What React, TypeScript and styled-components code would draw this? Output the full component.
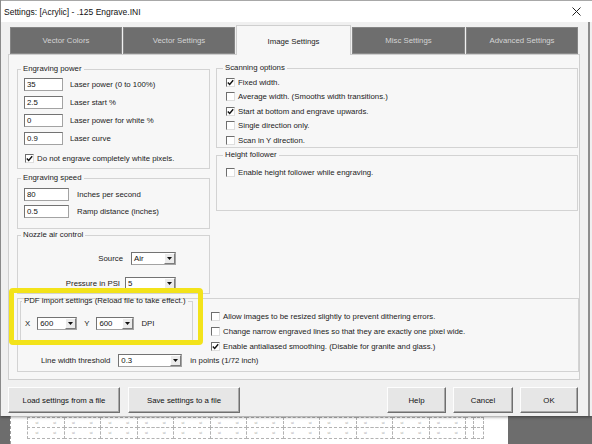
import React from "react";
import styled, { createGlobalStyle } from "styled-components";

const GlobalStyle = createGlobalStyle`
  html, body { margin: 0; padding: 0; background: #fff; }
  body { font-family: "Liberation Sans", Arial, sans-serif; }
  * { box-sizing: border-box; }
`;

const Page = styled.div`
  width: 592px;
  height: 444px;
  overflow: hidden;
  display: flex;
  flex-direction: column;
  background: #6d6d6d;
`;

const Dialog = styled.div`
  position: relative;
  z-index: 1;
  width: 592px;
  height: 416px;
  flex: none;
  display: flex;
  flex-direction: column;
  background: #f0f0f0;
  border-left: 1px solid #8a8a8a;
  box-shadow: 0 1px 3px rgba(0, 0, 0, 0.45);
  font-size: 7.8px;
  color: #222;
`;

const TitleBar = styled.div`
  height: 22px;
  flex: none;
  display: flex;
  align-items: center;
  justify-content: space-between;
  padding: 0 11px 0 3px;
  background: #fff;
  border-top: 1px solid #a8a8a8;
  font-size: 8.5px;
  color: #111;
`;

const Body = styled.div`
  flex: 1;
  display: flex;
`;

const Main = styled.div`
  width: 584px;
  display: flex;
  flex-direction: column;
`;

const RightEdge = styled.div`
  flex: 1;
  padding-left: 3px;
  display: flex;
`;

const Rail = styled.div`
  width: 2px;
  background: #8c8c8c;
`;

const TabsRow = styled.div`
  margin-top: 5px;
  height: 27px;
  padding-left: 9px;
  display: flex;
  gap: 1px;
`;

const Tab = styled.div<{ $w: number; $active?: boolean }>`
  position: relative;
  z-index: ${(p) => (p.$active ? 2 : 0)};
  width: ${(p) => p.$w}px;
  height: ${(p) => (p.$active ? 30 : 27)}px;
  margin-top: ${(p) => (p.$active ? -2 : 0)}px;
  display: flex;
  align-items: center;
  justify-content: center;
  padding-top: ${(p) => (p.$active ? 1 : 0)}px;
  background: ${(p) => (p.$active ? "#f7f7f7" : "#6e6e6e")};
  color: ${(p) => (p.$active ? "#1c1c1c" : "#d4d4d4")};
  border: 1px solid ${(p) => (p.$active ? "#cfcfcf" : "#858585")};
  border-bottom: ${(p) => (p.$active ? "none" : "1px solid #8a8a8a")};
`;

const Panel = styled.div`
  margin-left: 7px;
  width: 572px;
  height: 326px;
  background: #f7f7f7;
  border: 1px solid #cfcfcf;
  padding: 9px 1px 0 8px;
  display: flex;
  flex-direction: column;
`;

const TopSection = styled.div`
  display: flex;
  gap: 6px;
`;

const Column = styled.div<{ $w: number }>`
  width: ${(p) => p.$w}px;
  display: flex;
  flex-direction: column;
`;

const Group = styled.fieldset<{ $h: number; $mt?: number; $pt: number; $pl?: number }>`
  margin: ${(p) => p.$mt ?? 0}px 0 0 0;
  height: ${(p) => p.$h}px;
  min-width: 0;
  border: 1px solid #d3d3d3;
  padding: ${(p) => p.$pt}px 0 0 ${(p) => p.$pl ?? 6}px;
  display: flex;
  flex-direction: column;
`;

const Legend = styled.legend`
  font-size: 7.8px;
  line-height: 10px;
  padding: 0 2px;
  margin-left: -3px;
  color: #222;
`;

const Stack = styled.div<{ $gap: number }>`
  display: flex;
  flex-direction: column;
  gap: ${(p) => p.$gap}px;
`;

const FieldRow = styled.div<{ $gap: number }>`
  display: flex;
  align-items: center;
  gap: ${(p) => p.$gap}px;
  height: 13px;
`;

const TextBox = styled.div<{ $w: number }>`
  width: ${(p) => p.$w}px;
  height: 13px;
  background: #fff;
  border: 1px solid #a3a3a3;
  border-top-color: #737373;
  border-left-color: #737373;
  padding-left: 2px;
  line-height: 11px;
  color: #111;
`;

const SelectBox = styled.div<{ $w: number }>`
  width: ${(p) => p.$w}px;
  height: 13px;
  background: #fff;
  border: 1px solid #a3a3a3;
  border-top-color: #737373;
  border-left-color: #737373;
  display: flex;
  align-items: stretch;
  color: #111;
`;

const SelectText = styled.span`
  flex: 1;
  padding-left: 2px;
  line-height: 11px;
`;

const ArrowBox = styled.span`
  width: 11px;
  background: #ebebeb;
  border: 1px solid;
  border-color: #fff #7d7d7d #7d7d7d #fff;
  display: flex;
  align-items: center;
  justify-content: center;
`;

const NozzleRow = styled.div<{ $gap: number }>`
  display: flex;
  align-items: center;
  justify-content: flex-end;
  gap: ${(p) => p.$gap}px;
  height: 13px;
  padding-right: 33px;
`;

const CheckRow = styled.div<{ $ml?: number; $mt?: number }>`
  display: flex;
  align-items: center;
  gap: 3px;
  height: 10px;
  margin-left: ${(p) => p.$ml ?? 0}px;
  margin-top: ${(p) => p.$mt ?? 0}px;
`;

const Box = styled.span`
  width: 9px;
  height: 9px;
  flex: none;
  background: #fff;
  border: 1px solid;
  border-color: #6e6e6e #dedede #dedede #6e6e6e;
  display: flex;
  align-items: center;
  justify-content: center;
`;

const BottomGroup = styled.div`
  margin-top: 4px;
  width: 562px;
  height: 74px;
  border: 1px solid #d3d3d3;
  display: flex;
  flex-direction: column;
`;

const BottomTop = styled.div`
  display: flex;
`;

const PdfWrap = styled.div`
  position: relative;
  margin: -3px 0 0 2px;
  width: 173px;
`;

const PdfGroup = styled.fieldset`
  margin: 0;
  height: 45px;
  min-width: 0;
  border: 1px solid #d3d3d3;
  padding: 11px 0 0 4px;
  display: flex;
`;

const Highlight = styled.div`
  position: absolute;
  top: -8px;
  left: -11px;
  width: 194px;
  height: 57px;
  border: 5px solid #f3e31a;
  border-radius: 4px;
  pointer-events: none;
`;

const DpiRow = styled.div`
  display: flex;
  align-items: center;
  gap: 7px;
  height: 13px;
`;

const BottomChecks = styled.div`
  margin-left: 18px;
  padding-top: 12px;
  display: flex;
  flex-direction: column;
  gap: 5px;
`;

const LineRow = styled.div`
  margin-top: 3px;
  padding-left: 23px;
  display: flex;
  align-items: center;
  gap: 8px;
  height: 13px;
`;

const ButtonRow = styled.div`
  margin-top: 7px;
  height: 26px;
  padding: 0 7px;
  display: flex;
  gap: 8px;
`;

const ButtonGroup = styled.div`
  margin-left: auto;
  display: flex;
  gap: 7px;
`;

const Button = styled.div<{ $w: number }>`
  width: ${(p) => p.$w}px;
  height: 26px;
  display: flex;
  align-items: center;
  justify-content: center;
  background: #e6e6e6;
  border: 1px solid;
  border-color: #fdfdfd #6f6f6f #6f6f6f #fdfdfd;
  box-shadow: inset -1px -1px 0 #a8a8a8;
  color: #111;
  font-size: 7.8px;
`;

const BottomStrip = styled.div`
  flex: 1;
  display: flex;
`;

const GrayGap = styled.div<{ $w?: number }>`
  width: ${(p) => (p.$w ? `${p.$w}px` : "auto")};
  flex: ${(p) => (p.$w ? "none" : "1")};
  background: #6d6d6d;
`;

const Sheet = styled.div`
  width: 498px;
  background: #fff;
  border-left: 1px dashed #9a9a9a;
  padding: 1px 0 0 16px;
`;

const DashGrid = styled.div`
  display: grid;
  grid-template-columns: repeat(12, 36.5px) 8px 10px;
  grid-auto-rows: 10px 11px;
`;

const DashCell = styled.div`
  border: 1px dashed #b3b3b3;
  margin: 0 -1px -1px 0;
  display: flex;
  align-items: center;
  justify-content: space-around;
  font-size: 3.5px;
  color: #9a9a9a;
  overflow: hidden;
`;

const Check = () => (
  <svg width="7" height="7" viewBox="0 0 7 7">
    <path d="M0.8 3.4 L2.7 5.4 L6.2 1.2" fill="none" stroke="#111" strokeWidth="1.4" />
  </svg>
);

const CheckBox: React.FC<{ checked?: boolean; label: string; ml?: number; mt?: number }> = ({
  checked,
  label,
  ml,
  mt,
}) => (
  <CheckRow $ml={ml} $mt={mt}>
    <Box>{checked && <Check />}</Box>
    <span>{label}</span>
  </CheckRow>
);

const Select: React.FC<{ w: number; value: string }> = ({ w, value }) => (
  <SelectBox $w={w}>
    <SelectText>{value}</SelectText>
    <ArrowBox>
      <svg width="5" height="3" viewBox="0 0 5 3">
        <polygon points="0,0 5,0 2.5,3" fill="#111" />
      </svg>
    </ArrowBox>
  </SelectBox>
);

const tabs = [
  { label: "Vector Colors", w: 112 },
  { label: "Vector Settings", w: 112 },
  { label: "Image Settings", w: 115, active: true },
  { label: "Misc Settings", w: 113 },
  { label: "Advanced Settings", w: 112 },
];

const powerRows = [
  { v: "35", l: "Laser power (0 to 100%)" },
  { v: "2.5", l: "Laser start %" },
  { v: "0", l: "Laser power for white %" },
  { v: "0.9", l: "Laser curve" },
];

const scanRows = [
  { c: true, l: "Fixed width." },
  { c: false, l: "Average width. (Smooths width transitions.)" },
  { c: true, l: "Start at bottom and engrave upwards." },
  { c: false, l: "Single direction only." },
  { c: false, l: "Scan in Y direction." },
];

const App: React.FC = () => {
  const cells = Array.from({ length: 28 }, (_, i) => i);
  return (
    <Page>
      <GlobalStyle />
      <Dialog>
        <TitleBar>
          <span>Settings: [Acrylic] - .125 Engrave.INI</span>
          <svg width="9" height="9" viewBox="0 0 9 9">
            <path d="M0.5 0.5 L8.5 8.5 M8.5 0.5 L0.5 8.5" stroke="#222" strokeWidth="1" />
          </svg>
        </TitleBar>
        <Body>
          <Main>
            <TabsRow>
              {tabs.map((t) => (
                <Tab key={t.label} $w={t.w} $active={t.active}>
                  {t.label}
                </Tab>
              ))}
            </TabsRow>
            <Panel>
              <TopSection>
                <Column $w={193}>
                  <Group $h={105} $pt={4}>
                    <Legend>Engraving power</Legend>
                    <Stack $gap={5}>
                      {powerRows.map((r) => (
                        <FieldRow key={r.l} $gap={7}>
                          <TextBox $w={39}>{r.v}</TextBox>
                          <span>{r.l}</span>
                        </FieldRow>
                      ))}
                    </Stack>
                    <CheckBox checked label="Do not engrave completely white pixels." ml={1} mt={8} />
                  </Group>
                  <Group $h={56} $mt={4} $pt={5}>
                    <Legend>Engraving speed</Legend>
                    <Stack $gap={4}>
                      <FieldRow $gap={8}>
                        <TextBox $w={45}>80</TextBox>
                        <span>Inches per second</span>
                      </FieldRow>
                      <FieldRow $gap={8}>
                        <TextBox $w={45}>0.5</TextBox>
                        <span>Ramp distance (inches)</span>
                      </FieldRow>
                    </Stack>
                  </Group>
                  <Group $h={64} $mt={1} $pt={12}>
                    <Legend>Nozzle air control</Legend>
                    <Stack $gap={12}>
                      <NozzleRow $gap={8}>
                        <span>Source</span>
                        <Select w={45} value="Air" />
                      </NozzleRow>
                      <NozzleRow $gap={5}>
                        <span>Pressure in PSI</span>
                        <Select w={51} value="5" />
                      </NozzleRow>
                    </Stack>
                  </Group>
                </Column>
                <Column $w={362}>
                  <Group $h={85} $mt={-1} $pt={4} $pl={9}>
                    <Legend>Scanning options</Legend>
                    <Stack $gap={4.5}>
                      {scanRows.map((r) => (
                        <CheckBox key={r.l} checked={r.c} label={r.l} />
                      ))}
                    </Stack>
                  </Group>
                  <Group $h={61} $mt={2} $pt={7} $pl={9}>
                    <Legend>Height follower</Legend>
                    <CheckBox label="Enable height follower while engraving." />
                  </Group>
                </Column>
              </TopSection>
              <BottomGroup>
                <BottomTop>
                  <PdfWrap>
                    <PdfGroup>
                      <Legend>PDF import settings (Reload file to take effect.)</Legend>
                      <DpiRow>
                        <span>X</span>
                        <Select w={40} value="600" />
                        <span>Y</span>
                        <Select w={38} value="600" />
                        <span>DPI</span>
                      </DpiRow>
                    </PdfGroup>
                    <Highlight />
                  </PdfWrap>
                  <BottomChecks>
                    <CheckBox label="Allow images to be resized slightly to prevent dithering errors." />
                    <CheckBox label="Change narrow engraved lines so that they are exactly one pixel wide." />
                    <CheckBox checked label="Enable antialiased smoothing. (Disable for granite and glass.)" />
                  </BottomChecks>
                </BottomTop>
                <LineRow>
                  <span>Line width threshold</span>
                  <Select w={64} value="0.3" />
                  <span>in points (1/72 inch)</span>
                </LineRow>
              </BottomGroup>
            </Panel>
            <ButtonRow>
              <Button $w={112}>Load settings from a file</Button>
              <Button $w={112}>Save settings to a file</Button>
              <ButtonGroup>
                <Button $w={59}>Help</Button>
                <Button $w={60}>Cancel</Button>
                <Button $w={58}>OK</Button>
              </ButtonGroup>
            </ButtonRow>
          </Main>
          <RightEdge>
            <Rail />
          </RightEdge>
        </Body>
      </Dialog>
      <BottomStrip>
        <GrayGap $w={10} />
        <Sheet>
          <DashGrid>
            {cells.map((i) => (
              <DashCell key={i}>
                {i % 14 < 12 && (
                  <>
                    <span>ui</span>
                    <span>ui</span>
                  </>
                )}
              </DashCell>
            ))}
          </DashGrid>
        </Sheet>
        <GrayGap />
      </BottomStrip>
    </Page>
  );
};

export default App;
